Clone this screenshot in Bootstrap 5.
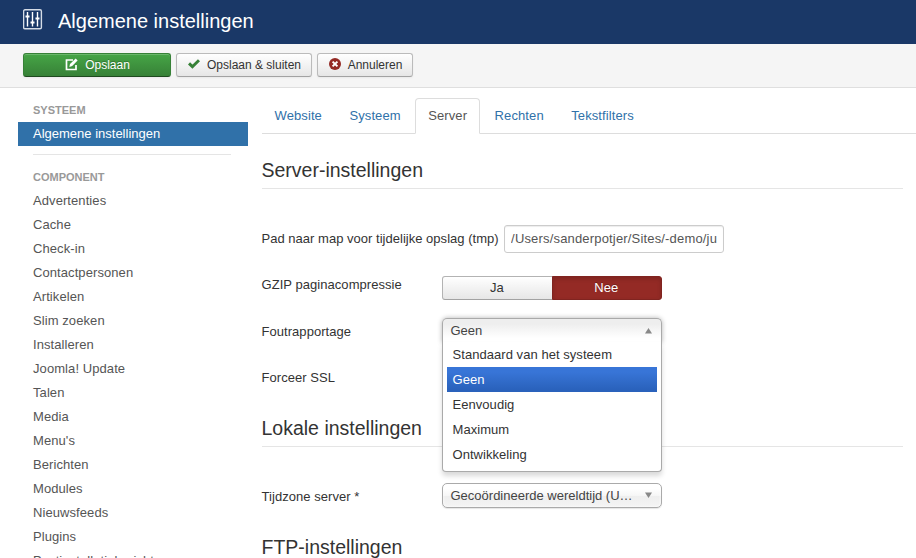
<!DOCTYPE html>
<html lang="nl">
<head>
<meta charset="utf-8">
<title>Algemene instellingen</title>
<link rel="stylesheet" href="https://cdn.jsdelivr.net/npm/bootstrap@5.3.0/dist/css/bootstrap.min.css">
<style>
body{font:13px/18px "Liberation Sans",Arial,sans-serif;color:#333;height:558px;overflow:hidden}
.topbar{height:44px;background:#1a3867;padding-left:23px}
.topbar svg{margin-bottom:6px}
.topbar h1{font-size:20px;line-height:24px;font-weight:400;margin:0 0 3px 15px;color:#fff}
.toolbar{height:44px;background:#f5f5f5;border-bottom:1px solid #dfdfdf;padding:9px 23px;gap:5px}
.tool{height:24px;padding:0;font-size:12px;line-height:22px;color:#333;border:1px solid #bbb;border-bottom-color:#a2a2a2;border-radius:3px;background:linear-gradient(#fff,#e6e6e6);box-shadow:inset 0 1px 0 rgba(255,255,255,.2),0 1px 2px rgba(0,0,0,.05)}
.tool svg{margin:0 7px 2px 1px}
.tool-save{width:148px;color:#fff;border-color:#378137 #378137 #1f4a1f;background:linear-gradient(#46a546,#378137);text-shadow:0 -1px 0 rgba(0,0,0,.25)}
.tool-close{width:136px}
.tool-cancel{width:96px}
.side{width:248px;padding:13px 0 0 18px}
.side .nav-link{height:24px;padding:3px 15px;color:#555;line-height:18px;white-space:nowrap;letter-spacing:.08px}
.side .nav-link.active{background:#3071a9;color:#fff;letter-spacing:0}
.side-head{font-size:11px;font-weight:700;color:#999;line-height:18px;height:21px;padding-left:15px}
.side-rule{height:1px;background:#e5e5e5;margin:8px 17px 13px 15px}
.main-area{margin-left:13.5px;padding-top:10px}
.nav-tabs{height:36px;border-color:#ddd}
.nav-tabs .nav-link{height:36px;padding:8px 12px;margin-right:1.5px;color:#3071a9;line-height:18px;letter-spacing:.1px;border-radius:4px 4px 0 0}
.nav-tabs .nav-link.active{color:#555;border-color:#ddd #ddd #fff}
.section-title{font-size:19.5px;line-height:36px;height:37px;font-weight:400;border-bottom:1px solid #e5e5e5;margin:0 13px 0 0;color:#333}
.section-first{margin-top:18px}
.lbl{width:180.5px;flex:none;letter-spacing:.05px}
.row-path{margin-top:36px;height:28px}
.row-path .lbl{margin-right:5.5px;letter-spacing:.02px}
.row-gzip{margin-top:23px;height:42px}
.row-error{height:43px}
.row-error .lbl,.row-zone .lbl{padding-top:5px}
.row-ssl{height:49px;padding-top:8px}
.row-zone{margin-top:36px;height:46px}
.path-input{width:220px;height:28px;padding:3px 6px 5px;font-size:13px;line-height:18px;letter-spacing:.17px;color:#555;border-color:#ccc;border-radius:3px;box-shadow:inset 0 1px 1px rgba(0,0,0,.075)}
.switch{width:220px;height:24px}
.switch .btn{width:110px;font-size:13px;line-height:22px;padding:0 1px 0 0;border:1px solid #b3b3b3;border-bottom-color:#a2a2a2;border-radius:3px;color:#333;background:linear-gradient(#fff,#e6e6e6)}
.switch .btn.off{color:#fff;background:#942a25;border-color:#802420;box-shadow:inset 0 2px 4px rgba(0,0,0,.15);text-shadow:0 -1px 0 rgba(0,0,0,.25)}
.picker{width:220px;height:25px;border:1px solid #aaa;border-radius:5px;padding:0 8px 0 7.500px;line-height:23px;color:#444;background:linear-gradient(#fff 20%,#f6f6f6 50%,#eee 52%,#f4f4f4);box-shadow:0 0 3px #fff inset,0 1px 1px rgba(0,0,0,.1)}
.picker.open{border-bottom:0;padding-bottom:2px;border-radius:5px 5px 0 0;background:linear-gradient(#eee 20%,#fff 80%);box-shadow:0 0 5px rgba(0,0,0,.3)}
.picker-menu{top:24px;left:0;width:220px;height:130px;padding:0 4px;background:#fff;border:1px solid #aaa;border-top:0;border-radius:0 0 4px 4px;box-shadow:0 4px 5px rgba(0,0,0,.15);z-index:5}
.picker-menu li{height:25px;line-height:25px;padding-left:5.500px;color:#333;letter-spacing:.05px}
.picker-menu .chosen{background:linear-gradient(#3875d7 20%,#2a62bc 90%);color:#fff}
</style>
<script src="https://cdn.jsdelivr.net/npm/bootstrap@5.3.0/dist/js/bootstrap.bundle.min.js"></script>
</head>
<body>
<header class="topbar d-flex align-items-center">
<svg width="20" height="21" viewBox="0 0 20 21" fill="none" stroke="#fff"><rect x=".6" y=".8" width="17.8" height="19" rx="1.4" stroke="#d5dce6" stroke-width="1.4"/><path d="M4.500 3v14.500M9.500 3v14.500M14.500 3v14.500" stroke-width="1.4"/><path d="M2.500 7.500h4M7.500 13.500h4M12.500 9.500h4" stroke-width="2"/></svg>
<h1>Algemene instellingen</h1>
</header>
<div class="toolbar d-flex">
<button class="btn tool tool-save d-flex align-items-center justify-content-center"><svg width="13" height="13" viewBox="0 0 13 13" fill="none" stroke="#fff"><path d="M8 2H1.500v9.500H11V7" stroke-width="1.700"/><path d="M4.300 9 5 6 10.700.6l1.900 1.900-5.400 5.600z" fill="#fff" stroke="none"/></svg>Opslaan</button>
<button class="btn tool tool-close d-flex align-items-center justify-content-center"><svg width="12" height="10" viewBox="0 0 12 10" fill="none" stroke="#378137" stroke-width="3"><path d="m1 4.400 3.400 3.300L11 1.200"/></svg>Opslaan &amp; sluiten</button>
<button class="btn tool tool-cancel d-flex align-items-center justify-content-center"><svg width="12" height="12" viewBox="0 0 12 12"><circle cx="6" cy="6" r="6" fill="#942a25"/><path d="m3.600 3.600 4.800 4.800m0-4.800L3.600 8.400" stroke="#fff" stroke-width="2"/></svg>Annuleren</button>
</div>
<div class="d-flex">
<aside class="side flex-shrink-0">
<div class="side-head">SYSTEEM</div>
<nav class="nav flex-column"><a class="nav-link active">Algemene instellingen</a></nav>
<div class="side-rule"></div>
<div class="side-head">COMPONENT</div>
<nav class="nav flex-column">
<a class="nav-link">Advertenties</a><a class="nav-link">Cache</a><a class="nav-link">Check-in</a><a class="nav-link">Contactpersonen</a><a class="nav-link">Artikelen</a><a class="nav-link">Slim zoeken</a><a class="nav-link">Installeren</a><a class="nav-link">Joomla! Update</a><a class="nav-link">Talen</a><a class="nav-link">Media</a><a class="nav-link">Menu's</a><a class="nav-link">Berichten</a><a class="nav-link">Modules</a><a class="nav-link">Nieuwsfeeds</a><a class="nav-link">Plugins</a><a class="nav-link">Postinstallatieberichten</a>
</nav>
</aside>
<main class="main-area flex-grow-1">
<ul class="nav nav-tabs">
<li class="nav-item"><a class="nav-link">Website</a></li><li class="nav-item"><a class="nav-link">Systeem</a></li><li class="nav-item"><a class="nav-link active">Server</a></li><li class="nav-item"><a class="nav-link">Rechten</a></li><li class="nav-item"><a class="nav-link">Tekstfilters</a></li>
</ul>
<h2 class="section-title section-first">Server-instellingen</h2>
<div class="row-path d-flex align-items-center"><label class="lbl w-auto" for="tmp">Pad naar map voor tijdelijke opslag (tmp)</label><input id="tmp" class="form-control path-input" value="/Users/sanderpotjer/Sites/-demo/ju"></div>
<div class="row-gzip d-flex"><div class="lbl">GZIP paginacompressie</div><div class="btn-group switch"><button class="btn">Ja</button><button class="btn off">Nee</button></div></div>
<div class="row-error d-flex"><div class="lbl">Foutrapportage</div>
<div class="position-relative"><div class="picker open d-flex justify-content-between align-items-center"><span>Geen</span><svg width="9" height="7"><path d="M1 6.500 4.500 1 8 6.500z" fill="#888"/></svg></div>
<ul class="picker-menu list-unstyled position-absolute mb-0"><li>Standaard van het systeem</li><li class="chosen">Geen</li><li>Eenvoudig</li><li>Maximum</li><li>Ontwikkeling</li></ul></div></div>
<div class="row-ssl d-flex"><div class="lbl">Forceer SSL</div></div>
<h2 class="section-title">Lokale instellingen</h2>
<div class="row-zone d-flex"><div class="lbl">Tijdzone server *</div><div class="picker d-flex justify-content-between align-items-center"><span>Gecoördineerde wereldtijd (U…</span><svg width="9" height="7"><path d="M1 .5 4.500 6 8 .5z" fill="#888"/></svg></div></div>
<h2 class="section-title">FTP-instellingen</h2>
</main>
</div>
</body>
</html>
